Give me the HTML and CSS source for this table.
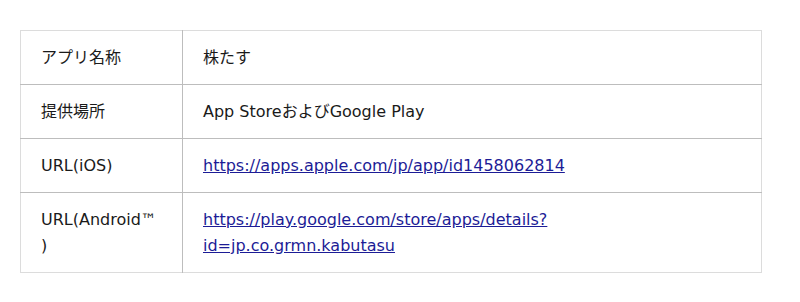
FILE: index.html
```html
<!DOCTYPE html>
<html lang="ja">
<head>
<meta charset="utf-8">
<link rel="stylesheet" href="styles.css">
</head>
<body>
<div class="wrap">
<table class="info">
<tr><th>アプリ名称</th><td>株たす</td></tr>
<tr><th>提供場所</th><td>App StoreおよびGoogle Play</td></tr>
<tr><th>URL(iOS)</th><td><a href="#">https://apps.apple.com/jp/app/id1458062814</a></td></tr>
<tr><th>URL(Android™<wbr>)</th><td><a href="#">https://play.google.com/store/apps/details?<wbr>id=jp.co.grmn.kabutasu</a></td></tr>
</table>
</div>
</body>
</html>
```
FILE: styles.css
```css
html, body { margin: 0; padding: 0; background: #fff; }
.wrap { padding: 30px 20px; }
.info {
  width: 742px;
  border-collapse: collapse;
  border: 1px solid #dcdcdc;
  font-family: "DejaVu Sans", "Noto Sans CJK JP", sans-serif;
  font-size: 16px;
  line-height: 26px;
  color: #1a1a1a;
  table-layout: fixed;
}
.info th, .info td {
  padding: 14px 20px 13px;
  text-align: left;
  font-weight: normal;
  vertical-align: top;
}
.info td { padding-right: 60px; }
.info th {
  width: 121px;
  border-right: 1px solid #bdbdbd;
}
.info tr + tr th, .info tr + tr td { border-top: 1px solid #bdbdbd; }
.info a { color: #1c1c96; text-decoration: underline; }
```
